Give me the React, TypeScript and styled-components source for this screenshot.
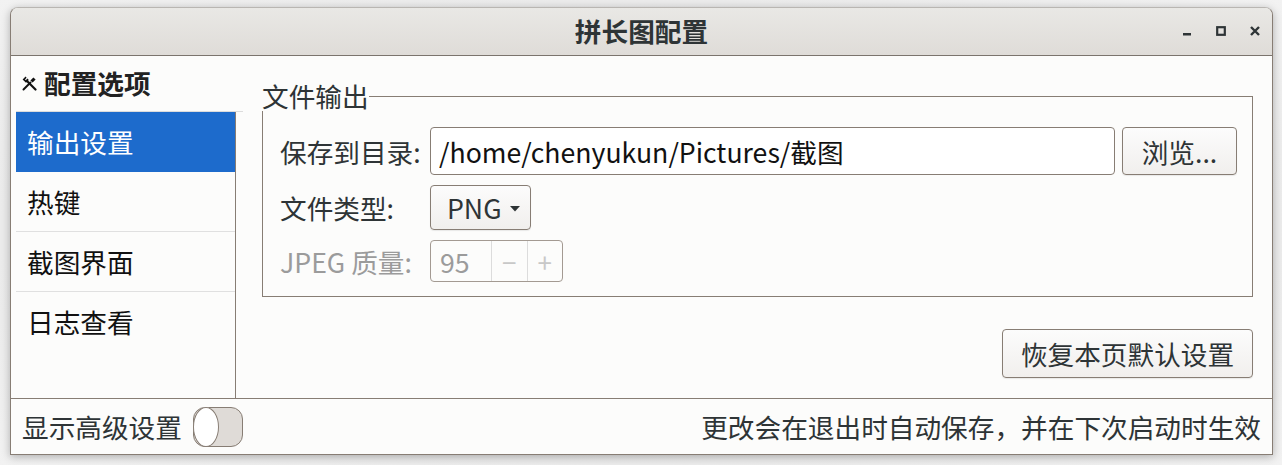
import styled, { createGlobalStyle } from 'styled-components';

const GlobalStyle = createGlobalStyle`
  html, body {
    margin: 0;
    padding: 0;
  }

  body {
    background: #ebebeb;
    font-family: "Noto Sans CJK SC", "Noto Sans", sans-serif;
    color: #1f1f1f;
  }
`;

const FONT_SIZE = '26.67px';
const BORDER = '#877d74';

const sections = ['输出设置', '热键', '截图界面', '日志查看'];

export default function App() {
  return (
    <>
      <GlobalStyle />
      <Desktop>
        <Window>
          <TitleBar>
            <Title>拼长图配置</Title>
            <Controls>
              <ControlButton aria-label="minimize">
                <svg width="12" height="12" viewBox="0 0 12 12">
                  <rect x="2" y="8" width="8" height="2.5" fill="#2e3436" />
                </svg>
              </ControlButton>
              <ControlButton aria-label="maximize">
                <svg width="12" height="12" viewBox="0 0 12 12">
                  <rect x="2.2" y="2.2" width="7.6" height="7.6" fill="none" stroke="#2e3436" strokeWidth="2.2" />
                </svg>
              </ControlButton>
              <ControlButton aria-label="close">
                <svg width="12" height="12" viewBox="0 0 12 12">
                  <path d="M2 2 L10 10 M10 2 L2 10" stroke="#2e3436" strokeWidth="2.4" />
                </svg>
              </ControlButton>
            </Controls>
          </TitleBar>

          <Main>
            <Sidebar>
              <SidebarHeader>
                <ToolsIcon width="15" height="15" viewBox="0 0 15 15">
                  {/* screwdriver: handle top-right, blade to bottom-left */}
                  <path d="M1.5 13.5 L8.5 6.5" stroke="#111" strokeWidth="2" strokeLinecap="round" />
                  <path d="M8.4 4.4 L11.4 1.4 L13.6 3.6 L10.6 6.6 Z" fill="#111" />
                  {/* wrench: open jaw top-left, handle to bottom-right */}
                  <path d="M5.5 5.5 L13.5 13.5" stroke="#111" strokeWidth="2.2" strokeLinecap="round" />
                  <path d="M0.6 3.6 L3.6 0.6 L4.6 1.8 L3 3.4 L3.8 4.2 L5.4 2.6 L6.8 4 L4 6.8 Z" fill="#111" />
                </ToolsIcon>
                <span>配置选项</span>
              </SidebarHeader>
              <SectionList>
                {sections.map((s, i) => (
                  <SectionItem key={s} $active={i === 0}>
                    {s}
                  </SectionItem>
                ))}
              </SectionList>
            </Sidebar>

            <Content>
              <GroupBox>
                <GroupTitle>文件输出</GroupTitle>
                <FormGrid>
                  <FieldLabel>保存到目录:</FieldLabel>
                  <PathRow>
                    <PathInput defaultValue="/home/chenyukun/Pictures/截图" />
                    <PushButton $width={115} $height={48}>浏览...</PushButton>
                  </PathRow>

                  <FieldLabel>文件类型:</FieldLabel>
                  <div>
                    <ComboBox>
                      <span>PNG</span>
                      <svg width="10" height="6" viewBox="0 0 10 6">
                        <path d="M0 0 L10 0 L5 5.5 Z" fill="#2e3436" />
                      </svg>
                    </ComboBox>
                  </div>

                  <FieldLabel $disabled>JPEG 质量:</FieldLabel>
                  <div>
                    <SpinBox>
                      <SpinValue>95</SpinValue>
                      <SpinStep>−</SpinStep>
                      <SpinStep>+</SpinStep>
                    </SpinBox>
                  </div>
                </FormGrid>
              </GroupBox>

              <ActionRow>
                <PushButton $width={251} $height={49}>恢复本页默认设置</PushButton>
              </ActionRow>
            </Content>
          </Main>

          <Footer>
            <FooterLeft>
              <span>显示高级设置</span>
              <Switch>
                <Knob />
              </Switch>
            </FooterLeft>
            <span>更改会在退出时自动保存，并在下次启动时生效</span>
          </Footer>
        </Window>
      </Desktop>
    </>
  );
}

const Desktop = styled.div`
  width: 1282px;
  height: 465px;
  padding: 7px 0 0 10px;
  box-sizing: border-box;
  background: radial-gradient(ellipse at center, #dcdcdc 0%, #ececec 75%, #f2f2f2 100%);
`;

const Window = styled.div`
  width: 1263px;
  height: 448px;
  box-sizing: border-box;
  border: 1px solid ${BORDER};
  border-top-color: #b9b6b2;
  border-radius: 8px 8px 0 0;
  background: #fcfcfb;
  display: flex;
  flex-direction: column;
  box-shadow: 0 2px 8px rgba(0, 0, 0, 0.28);
  overflow: hidden;
`;

const TitleBar = styled.div`
  height: 48px;
  flex-shrink: 0;
  box-sizing: border-box;
  border-bottom: 1px solid #7b746d;
  background: linear-gradient(#e9e8e5, #dfdcd8);
  display: flex;
  align-items: center;
  justify-content: center;
  position: relative;
`;

const Title = styled.div`
  font-size: ${FONT_SIZE};
  font-weight: 700;
  color: #2e3436;
  line-height: 1;
  margin-top: -1px;
`;

const Controls = styled.div`
  position: absolute;
  right: 11px;
  top: 0;
  bottom: 0;
  display: flex;
  align-items: center;
  gap: 22px;
`;

const ControlButton = styled.div`
  width: 12px;
  height: 12px;
  display: flex;
  margin-top: -2px;
`;

const Main = styled.div`
  flex: 1;
  display: flex;
  min-height: 0;
`;

const Sidebar = styled.div`
  width: 232px;
  flex-shrink: 0;
  padding-left: 5px;
  box-sizing: border-box;
  display: flex;
  flex-direction: column;
`;

const SidebarHeader = styled.div`
  height: 56px;
  box-sizing: border-box;
  border-bottom: 1px solid #dcdcdc;
  display: flex;
  align-items: center;
  gap: 7px;
  padding-left: 6px;
  padding-bottom: 2px;
  font-size: ${FONT_SIZE};
  font-weight: 700;
  color: #222;
`;

const ToolsIcon = styled.svg`
  flex-shrink: 0;
  margin-top: 1px;
`;

const SectionList = styled.div`
  width: 220px;
  flex: 1;
  box-sizing: border-box;
  border-right: 1px solid ${BORDER};
  display: flex;
  flex-direction: column;
`;

const SectionItem = styled.div<{ $active?: boolean }>`
  height: 60px;
  flex-shrink: 0;
  box-sizing: border-box;
  padding-left: 11px;
  display: flex;
  align-items: center;
  font-size: ${FONT_SIZE};
  color: ${(p) => (p.$active ? '#ffffff' : '#111')};
  background: ${(p) => (p.$active ? '#1d6bcc' : 'transparent')};
  border-bottom: 1px solid ${(p) => (p.$active ? '#1d6bcc' : '#e0e0e0')};

  &:last-child {
    border-bottom-color: transparent;
  }
`;

const Content = styled.div`
  flex: 1;
  padding: 25px 19px 0 19px;
  display: flex;
  flex-direction: column;
`;

const GroupBox = styled.fieldset`
  margin: 0;
  padding: 16px 15px 14px 17px;
  border: 1px solid ${BORDER};
  border-radius: 0;
`;

const GroupTitle = styled.legend`
  padding: 0;
  margin-left: -18px;
  font-size: ${FONT_SIZE};
  line-height: 30px;
  color: #2e3436;
  background: #fcfcfb;
`;

const FormGrid = styled.div`
  display: grid;
  grid-template-columns: 138px 1fr;
  grid-template-rows: 48px 45px 42px;
  column-gap: 12px;
  row-gap: 10px;
  align-items: center;
`;

const FieldLabel = styled.div<{ $disabled?: boolean }>`
  font-size: ${FONT_SIZE};
  color: ${(p) => (p.$disabled ? '#9b9b9b' : '#2e3436')};
  white-space: nowrap;
`;

const PathRow = styled.div`
  display: flex;
  gap: 7px;
  height: 48px;
`;

const PathInput = styled.input`
  flex: 1;
  min-width: 0;
  height: 48px;
  box-sizing: border-box;
  border: 1px solid ${BORDER};
  border-radius: 4px;
  background: #ffffff;
  padding: 0 8px;
  font-family: inherit;
  font-size: ${FONT_SIZE};
  color: #111;
  outline: none;
`;

const PushButton = styled.button<{ $width: number; $height: number }>`
  width: ${(p) => p.$width}px;
  height: ${(p) => p.$height}px;
  box-sizing: border-box;
  border: 1px solid ${BORDER};
  border-radius: 4px;
  background: linear-gradient(#fcfcfc, #f1efed);
  box-shadow: 0 1px 1px rgba(0, 0, 0, 0.08);
  font-family: inherit;
  font-size: ${FONT_SIZE};
  color: #2e3436;
  padding: 0;
  display: flex;
  align-items: center;
  justify-content: center;
`;

const ComboBox = styled.div`
  width: 101px;
  height: 45px;
  box-sizing: border-box;
  border: 1px solid ${BORDER};
  border-radius: 4px;
  background: linear-gradient(#fcfcfc, #f1efed);
  box-shadow: 0 1px 1px rgba(0, 0, 0, 0.08);
  display: flex;
  align-items: center;
  gap: 8px;
  padding-left: 16px;
  font-size: ${FONT_SIZE};
  color: #2e3436;

  svg {
    margin-top: 2px;
  }
`;

const SpinBox = styled.div`
  width: 133px;
  height: 42px;
  box-sizing: border-box;
  border: 1px solid #a39a92;
  border-radius: 4px;
  background: #fcfcfb;
  display: flex;
  overflow: hidden;
`;

const SpinValue = styled.div`
  width: 61px;
  padding-left: 9px;
  box-sizing: border-box;
  display: flex;
  align-items: center;
  font-size: ${FONT_SIZE};
  color: #9b9b9b;
  border-right: 1px solid #dcdcdc;
`;

const SpinStep = styled.div`
  flex: 1;
  display: flex;
  align-items: center;
  justify-content: center;
  font-size: 26px;
  color: #c8c8c8;

  & + & {
    border-left: 1px solid #dcdcdc;
  }
`;

const ActionRow = styled.div`
  margin-top: 32px;
  display: flex;
  justify-content: flex-end;
`;

const Footer = styled.div`
  height: 56px;
  flex-shrink: 0;
  box-sizing: border-box;
  border-top: 1px solid ${BORDER};
  display: flex;
  align-items: center;
  justify-content: space-between;
  padding: 0 11px 0 11px;
  font-size: ${FONT_SIZE};
  color: #2e3436;
`;

const FooterLeft = styled.div`
  display: flex;
  align-items: center;
  gap: 11px;
`;

const Switch = styled.div`
  width: 50px;
  height: 40px;
  box-sizing: border-box;
  border: 1px solid ${BORDER};
  border-radius: 12px;
  background: #dfdbd7;
  position: relative;
`;

const Knob = styled.div`
  position: absolute;
  left: -1px;
  top: -1px;
  width: 26px;
  height: 40px;
  box-sizing: border-box;
  border: 1px solid ${BORDER};
  border-radius: 50%;
  background: #ffffff;
`;
